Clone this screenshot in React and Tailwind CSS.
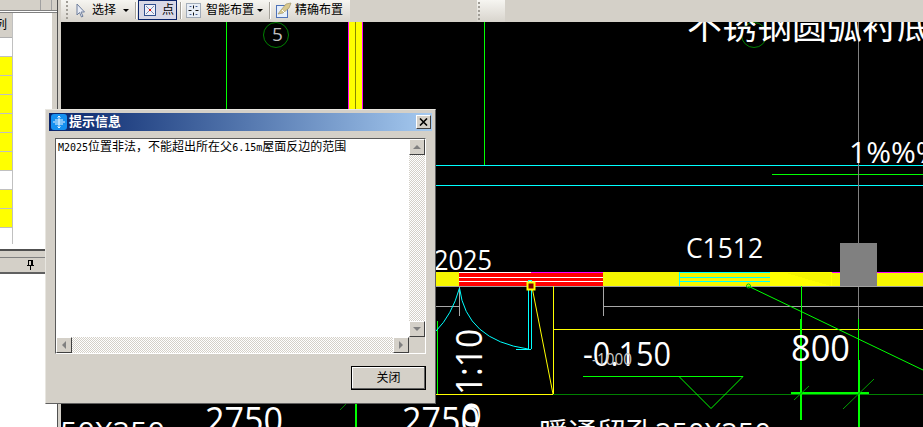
import React from "react";

const cjk = "font-['Liberation_Sans','Noto_Sans_CJK_SC',sans-serif]";
const raised =
  "border border-t-white border-l-white border-r-[#404040] border-b-[#404040] bg-[#d4d0c8]";
const dither =
  "bg-[repeating-conic-gradient(#d4d0c8_0%_25%,#ffffff_0%_50%)] bg-[length:2px_2px]";

const rows = [false, true, true, true, true, true, true, false, true, true];

const Sep = () => <div className="w-px h-[17px] bg-[#a5a29b] border-r border-white box-content" />;

const Grip = () => (
  <div className="flex flex-col gap-[2px] w-[2px]">
    {[0, 1, 2, 3, 4].map((i) => (
      <div key={i} className="w-[2px] h-[2px] bg-[#a09d96]" />
    ))}
  </div>
);

const Caret = () => (
  <div className="w-0 h-0 border-x-[3px] border-x-transparent border-t-[3px] border-t-black" />
);

const ScrollBtn = ({ dir }) => {
  const arrows = {
    up: "border-x-[4px] border-x-transparent border-b-[4px] border-b-[#808080]",
    down: "border-x-[4px] border-x-transparent border-t-[4px] border-t-[#808080]",
    left: "border-y-[4px] border-y-transparent border-r-[4px] border-r-[#808080]",
    right: "border-y-[4px] border-y-transparent border-l-[4px] border-l-[#808080]",
  };
  return (
    <div className={`w-4 h-4 shrink-0 flex items-center justify-center ${raised}`}>
      <div className={`w-0 h-0 ${arrows[dir]}`} />
    </div>
  );
};

const Toolbar = () => (
  <div className="h-[22px] flex bg-[#d4d0c8] text-xs text-black">
    <div className="w-[289px] h-[22px] flex items-center pl-[5px] pb-[2px] bg-gradient-to-b from-[#f6f5f1] to-[#d8d4cd]">
      <Grip />
      <svg width="9" height="15" viewBox="0 0 9 15" className="ml-[8px]">
        <path d="M1 1v11l2.500-2.500 2 4.500 1.500-.7-2-4.300h3.500z" fill="#e8ecf5" stroke="#6f7f9c" />
      </svg>
      <span className="ml-[7px]">选择</span>
      <div className="ml-[7px]"><Caret /></div>
      <div className="ml-[6px]"><Sep /></div>
      <div className="ml-[1px] w-[39px] h-[20px] flex items-center pl-[5px] gap-[6px] border border-[#0a246a] bg-[#d8d8e6]">
        <svg width="12" height="12" viewBox="0 0 12 12">
          <rect x="0.500" y="0.500" width="11" height="11" fill="#eef0f8" stroke="#30508f" />
          <path d="M2 2l8 8M10 2l-8 8" stroke="#7d8fb5" />
          <rect x="5" y="5" width="2" height="2" fill="#e01010" />
        </svg>
        <span>点</span>
      </div>
      <div className="ml-[3px]"><Sep /></div>
      <svg width="15" height="15" viewBox="0 0 15 15" className="ml-[4px]">
        <rect x="0.500" y="0.500" width="14" height="14" fill="#e8eef6" stroke="#5d6f88" strokeDasharray="1 1" />
        <path d="M7.500 2.500v3M7.500 9.500v3M2.500 7.500h3M9.500 7.500h3" stroke="#111" />
        <path d="M3 4l1.500-1L6 4zM9 4l1.500-1L12 4zM3 11l1.500 1L6 11zM9 11l1.500 1L12 11z" fill="#1f3f80" />
      </svg>
      <span className="ml-[5px]">智能布置</span>
      <div className="ml-[3px]"><Caret /></div>
      <div className="ml-[6px]"><Sep /></div>
      <svg width="16" height="16" viewBox="0 0 16 16" className="ml-[5px]">
        <rect x="0.500" y="3.500" width="11" height="12" fill="#e6effb" stroke="#4e72b8" />
        <path d="M2 12l3-4 5-6 5-1-2 5-6 5z" fill="#d9c98f" stroke="#a39668" strokeWidth="0.700" />
        <path d="M6 8l3 3" stroke="#fff" />
      </svg>
      <span className="ml-[3px]">精确布置</span>
    </div>
    <div className="w-[127px]" />
    <div className="w-[28px] h-[22px] flex items-center pl-[1px] bg-gradient-to-b from-[#f6f5f1] to-[#d8d4cd]">
      <Grip />
    </div>
  </div>
);

const Drawing = () => (
  <svg width="862" height="405" viewBox="61 22 862 405" className="block bg-black font-['Open_Sans','Noto_Sans_CJK_SC',sans-serif]">
    <g shapeRendering="crispEdges" fill="none" strokeWidth="1">
      <rect x="349" y="22" width="13" height="90" fill="#ffff00" />
      <path d="M348.500 22v90M362.500 22v90" stroke="#ff00ff" />
      <path d="M355.500 22v90" stroke="#8a8a00" />
      <path d="M226.500 22v90M484.500 22v143" stroke="#00ff00" />
      <path d="M435 165.500h488M435 185.500h488" stroke="#00ffff" />
      <path d="M772 174.500h151" stroke="#00ff00" />
      <path d="M858.500 22v221M858.500 286v74" stroke="#808080" />

      <rect x="436" y="272" width="23" height="14" fill="#f6f600" />
      <rect x="459" y="272" width="144" height="14" fill="#ff0000" />
      <path d="M459 272.500h72M459 277.500h144M459 281.500h144" stroke="#ffffff" />
      <path d="M531 272.500h72" stroke="#ff00ff" />
      <rect x="603" y="272" width="76" height="14" fill="#f6f600" />
      <rect x="679" y="272" width="91" height="14" fill="#f6f600" />
      <path d="M679 272.500h91M680 277.500h90M680 281.500h90M679.500 272v14" stroke="#00ffff" />
      <rect x="770" y="272" width="62" height="14" fill="#ffff00" />
      <path d="M786 273l45 13v-13z" fill="#f6f600" stroke="none" />
      <rect x="832" y="272" width="8" height="14" fill="#f6f600" />
      <rect x="877" y="272" width="46" height="14" fill="#f6f600" />
      <path d="M832 272.500h8M877 272.500h46" stroke="#ff00ff" />
      <rect x="840" y="243" width="37" height="43" fill="#808080" />
      <path d="M436 286.500h487" stroke="#a0a0a0" />

      <path d="M436 306.500h23M459.500 286v30M603.500 286v30M603 306.500h320" stroke="#a8a8a8" />
      <path d="M553.500 286v108M553 329.500h370M436 394.500h117" stroke="#ffff00" />
      <path d="M553 394.500h370" stroke="#008000" />
      <path d="M528.500 280v69M531.500 280v69M528 280.500h3M516 349.500h15" stroke="#00ffff" />
      <path d="M437.500 321v73" stroke="#00ff00" />
      <path d="M801.500 286v33M583 376.500h160" stroke="#00ff00" />
      <path d="M800 319h2v101h-2zM858 319h1v41h-1zM858 360h2v67h-2zM791 392h78v2h-78z" fill="#00ff00" />
      <path d="M355 404h2v23h-2z" fill="#00ff00" />
      <rect x="752" y="23" width="3" height="2" fill="#ff80ff" />
    </g>

    <path d="M459.500 288Q466 340 528 349" fill="none" stroke="#00ffff" />
    <path d="M459.500 288Q452 315 436 331" fill="none" stroke="#00ffff" />
    <path d="M532 287l21 107" fill="none" stroke="#ffff00" />
    <path d="M748 286l175 84" fill="none" stroke="#00ff00" />
    <circle cx="748.500" cy="286" r="2" fill="none" stroke="#00c000" />
    <path d="M679 376.500l32 32 32-32" fill="none" stroke="#00ff00" />
    <path d="M794 400l15-14M843 409l31-30" fill="none" stroke="#00a000" />
    <path d="M340 410l6-6" fill="none" stroke="#008000" />
    <circle cx="276" cy="35" r="12.500" fill="none" stroke="#008000" />
    <circle cx="754" cy="35" r="12.500" fill="none" stroke="#008000" />
    <rect x="527.500" y="282.500" width="7" height="7" fill="#800000" stroke="#ffff00" strokeWidth="2" />

    <text x="272" y="41" fontSize="19" fill="#c0c0c0">5</text>
    <text x="687" y="39" fontSize="35" fill="#ffffff">不锈钢圆弧衬底</text>
    <text x="849" y="163" fontSize="30" fill="#ffffff">1%%%</text>
    <text x="434" y="270" fontSize="28" fill="#ffffff" textLength="58" lengthAdjust="spacingAndGlyphs">2025</text>
    <text x="686" y="258" fontSize="28" fill="#ffffff" textLength="77" lengthAdjust="spacingAndGlyphs">C1512</text>
    <text x="791" y="361" fontSize="36" fill="#ffffff" textLength="59" lengthAdjust="spacingAndGlyphs">800</text>
    <text x="583" y="366" fontSize="32" fill="#ffffff" textLength="88" lengthAdjust="spacingAndGlyphs">-0.150</text>
    <text x="592" y="365" fontSize="17" fill="#c8c8c8" textLength="40" lengthAdjust="spacingAndGlyphs">-1000</text>
    <text x="205" y="433" fontSize="36" fill="#ffffff" textLength="78" lengthAdjust="spacingAndGlyphs">2750</text>
    <text x="402" y="433" fontSize="36" fill="#ffffff" textLength="78" lengthAdjust="spacingAndGlyphs">2750</text>
    <text x="60" y="442" fontSize="28" fill="#ffffff" textLength="105" lengthAdjust="spacingAndGlyphs">50X250</text>
    <text x="539" y="443" fontSize="28" fill="#ffffff" textLength="232" lengthAdjust="spacingAndGlyphs">暖通留孔250X250</text>
    <text transform="translate(482 395) rotate(-90)" fontSize="37" fill="#ffffff" textLength="66" lengthAdjust="spacingAndGlyphs">1:10</text>
    <text transform="translate(480 429) rotate(-90)" fontSize="23" fill="#ffffff" textLength="28" lengthAdjust="spacingAndGlyphs">0</text>
  </svg>
);

const Dialog = () => (
  <div className={`absolute left-[45px] top-[109px] w-[391px] h-[295px] p-[3px] flex flex-col bg-[#d4d0c8] border border-t-[#e8e6e0] border-l-[#e8e6e0] border-r-[#606060] border-b-[#606060] ${cjk}`}>
    <div className="h-[18px] flex items-center bg-gradient-to-r from-[#0a246a] to-[#a6caf0]">
      <svg width="16" height="16" viewBox="0 0 16 16" className="ml-[2px]">
        <rect width="16" height="16" rx="3" fill="#1590f0" />
        <path d="M8 2v12M2 8h12M4 6h8M4 10h8M6.500 3.500L8 2l1.500 1.500M6.500 12.500L8 14l1.500-1.500" stroke="#fff" strokeWidth="0.900" fill="none" />
      </svg>
      <span className="ml-[2px] text-[13px] font-bold text-white">提示信息</span>
      <div className={`ml-auto mr-[1px] w-[15px] h-[14px] flex items-center justify-center ${raised}`}>
        <svg width="9" height="8" viewBox="0 0 9 8">
          <path d="M1 0.500l7 7M8 0.500l-7 7" stroke="#000" strokeWidth="1.600" fill="none" />
        </svg>
      </div>
    </div>

    <div className="ml-[6px] mr-[6px] mt-[7px] h-[216px] flex flex-col border border-t-[#5a5a5a] border-l-[#5a5a5a] border-r-white border-b-white">
      <div className="flex flex-1 min-h-0">
        <div className="flex-1 bg-white pl-[2px] pt-[1px] text-xs leading-[14px] text-black whitespace-nowrap">
          <span className="font-['DejaVu_Sans_Mono'] text-[10px]">M2025</span>位置非法，不能超出所在父
          <span className="font-['DejaVu_Sans_Mono'] text-[10px]">6.15m</span>屋面反边的范围
        </div>
        <div className={`w-4 flex flex-col justify-between ${dither}`}>
          <ScrollBtn dir="up" />
          <ScrollBtn dir="down" />
        </div>
      </div>
      <div className="h-4 flex">
        <div className={`flex-1 flex justify-between ${dither}`}>
          <ScrollBtn dir="left" />
          <ScrollBtn dir="right" />
        </div>
        <div className="w-4 bg-[#d4d0c8]" />
      </div>
    </div>

    <div className="flex-1 flex justify-end items-start pt-[12px] pr-[6px]">
      <button className="w-[75px] h-[24px] text-xs text-black bg-[#d4d0c8] border border-black shadow-[inset_-1px_-1px_0_#606060,inset_1px_1px_0_#ffffff]">
        关闭
      </button>
    </div>
  </div>
);

const LeftPanel = () => (
  <div className={`w-[57px] h-full flex flex-col bg-white ${cjk}`}>
    <div className="h-[11px] flex justify-end bg-[#d4d0c8] border-b border-[#808080] pr-[5px]">
      <div className="w-[12px] border-x border-[#a0a0a0]" />
    </div>
    <div className="h-[232px] flex mt-[1px] border-t border-[#808080]">
      <div className="w-[13px] flex flex-col border-r border-[#c0c0c0]">
        <div className="h-[25px] flex items-center justify-end bg-[#d4d0c8] border-b border-[#b0b0b0] overflow-hidden text-xs text-black">
          <span className="mr-[5px]">列</span>
        </div>
        {rows.map((on, i) => (
          <div key={i} className={`h-[19px] shrink-0 border-b border-[#c0c0c0] ${on ? "bg-[#ffff00]" : "bg-white"}`} />
        ))}
      </div>
      <div className="flex-1 border-r-[5px] border-[#d4d0c8]" />
    </div>
    <div className="mt-[5px] h-[8px] bg-[#d4d0c8] border-t-2 border-[#505050]" />
    <div className="h-[15px] flex items-center bg-[#d4d0c8] border-t border-[#808080] pl-[27px]">
      <svg width="7" height="10" viewBox="0 0 7 10">
        <path d="M1.500 0.500h4v5h-4zM0 5.500h7M3.500 6v4" stroke="#000" fill="none" shapeRendering="crispEdges" />
        <path d="M4 1h1v4h-1z" fill="#000" />
      </svg>
    </div>
    <div className="h-[2px] bg-[#606060]" />
    <div className="flex-1 bg-white" />
  </div>
);

export default function App() {
  return (
    <div className="relative w-[923px] h-[427px] flex overflow-hidden bg-[#d4d0c8]">
      <LeftPanel />
      <div className="w-[4px] h-full bg-[#d4d0c8] border-l border-[#505050]" />
      <div className="flex-1 flex flex-col min-w-0">
        <div className={cjk}>
          <Toolbar />
        </div>
        <Drawing />
      </div>
      <Dialog />
    </div>
  );
}
